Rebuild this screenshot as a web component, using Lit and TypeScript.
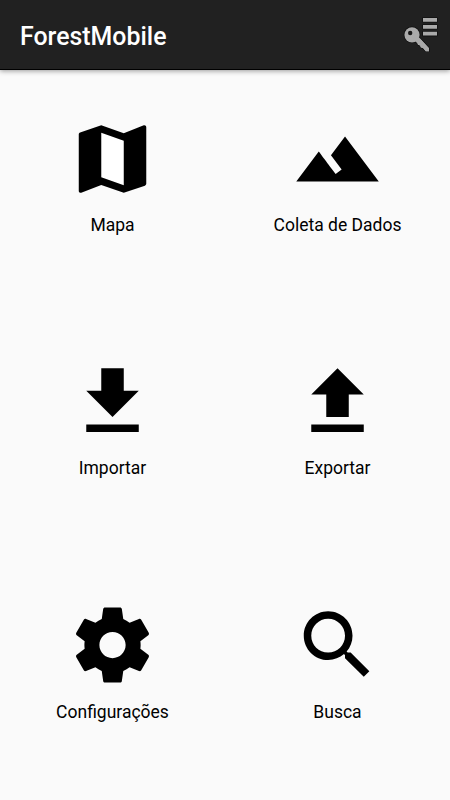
import { LitElement, html, css, svg } from "lit";
import { customElement } from "lit/decorators.js";

const items = [
  { label: "Mapa", map: true, d: "M20.5 3l-.16.03L15 5.1 9 3 3.36 4.9c-.21.07-.36.25-.36.48V20.5c0 .28.22.5.5.5l.16-.03L9 18.9l6 2.1 5.64-1.9c.21-.07.36-.25.36-.48V3.5c0-.28-.22-.5-.5-.5zM15 19l-6-2.11V5l6 2.11V19z" },
  { label: "Coleta de Dados", d: "M14 6l-3.75 5 2.85 3.8-1.6 1.2C9.81 13.75 7 10 7 10l-6 8h22L14 6z" },
  { label: "Importar", d: "M19 9h-4V3H9v6H5l7 7 7-7zM5 18v2h14v-2H5z" },
  { label: "Exportar", d: "M9 16h6v-6h4l-7-7-7 7h4zm-4 2h14v2H5z" },
  { label: "Configurações", d: "M19.43 12.98c.04-.32.07-.64.07-.98s-.03-.66-.07-.98l2.11-1.65c.19-.15.24-.42.12-.64l-2-3.46c-.12-.22-.39-.3-.61-.22l-2.49 1c-.52-.4-1.08-.73-1.69-.98l-.38-2.65C14.46 2.18 14.25 2 14 2h-4c-.25 0-.46.18-.49.42l-.38 2.65c-.61.25-1.17.59-1.69.98l-2.49-1c-.23-.09-.49 0-.61.22l-2 3.46c-.13.22-.07.49.12.64l2.11 1.65c-.04.32-.07.65-.07.98s.03.66.07.98l-2.11 1.65c-.19.15-.24.42-.12.64l2 3.46c.12.22.39.3.61.22l2.49-1c.52.4 1.08.73 1.69.98l.38 2.65c.03.24.24.42.49.42h4c.25 0 .46-.18.49-.42l.38-2.65c.61-.25 1.17-.59 1.69-.98l2.49 1c.23.09.49 0 .61-.22l2-3.46c.12-.22.07-.49-.12-.64l-2.11-1.65zM12 15.5c-1.93 0-3.5-1.57-3.5-3.5s1.57-3.5 3.5-3.5 3.5 1.57 3.5 3.5-1.57 3.5-3.5 3.5z" },
  { label: "Busca", d: "M15.5 14h-.79l-.28-.27C15.41 12.59 16 11.11 16 9.5 16 5.91 13.09 3 9.5 3S3 5.91 3 9.5 5.91 16 9.5 16c1.61 0 3.09-.59 4.23-1.57l.27.28v.79l5 4.99L20.49 19l-4.99-5zm-6 0C7.01 14 5 11.99 5 9.5S7.01 5 9.5 5 14 7.01 14 9.5 11.99 14 9.5 14z" },
];

@customElement("app-root")
export class AppRoot extends LitElement {
  static styles = css`
    :host {
      display: flex;
      flex-direction: column;
      height: 100vh;
      background: #fafafa;
      color: #000;
      font-family: Roboto, "Liberation Sans", sans-serif;
    }
    .bar {
      box-sizing: border-box;
      flex: none;
      height: 70px;
      padding: 0 10px 0 20px;
      display: flex;
      align-items: center;
      justify-content: space-between;
      background: #212121;
      border-bottom: 1px solid #000;
      box-shadow: 0 1px 5px rgba(0, 0, 0, 0.4);
    }
    .title {
      margin: 0;
      padding-top: 4px;
      font-size: 24.9px;
      line-height: 30px;
      font-weight: 500;
      color: #fff;
    }
    .key {
      width: 36px;
      height: 39px;
      display: block;
    }
    .grid {
      flex: 1;
      display: grid;
      grid-template-columns: 1fr 1fr;
      grid-template-rows: repeat(3, 1fr);
    }
    .item {
      display: flex;
      flex-direction: column;
      align-items: center;
      padding-top: 43.5px;
    }
    .icon {
      width: 90px;
      height: 90px;
      display: block;
    }
    .label {
      margin-top: 10.5px;
      font-size: 17.5px;
      line-height: 22px;
    }
  `;

  render() {
    return html`
      <header class="bar">
        <h1 class="title">ForestMobile</h1>
        <svg class="key" viewBox="404 15 36 39" overflow="visible">
          <g fill="#aaa" stroke="#111" stroke-width="1.600" stroke-linejoin="round" paint-order="stroke">
            <path d="M419.300 37.700L429 48.300V51.300H425.700L423.300 48.300 420.700 47.300 420.300 45.500 418 44.800 417.300 42.700 414 41Z" />
            <circle cx="412" cy="34.800" r="7.600" />
            <path d="M423 18h14v3.800h-14zM423 25h14v3.800h-14zM423 31.800h14v3.800h-14z" />
          </g>
          <path fill="#aaa" d="M419.300 37.700L429 48.300V51.300H425.700L423.300 48.300 420.700 47.300 420.300 45.500 418 44.800 417.300 42.700 412 39Z" />
          <circle cx="410.200" cy="33" r="2.200" fill="#181818" />
        </svg>
      </header>
      <main class="grid">
        ${items.map(
          (i) => html`<div class="item">
            <svg class="icon" viewBox="0.130 0 24 24">
              ${i.map ? svg`<path fill="#fff" d="M9 5l6 2.110V19l-6-2.110z" />` : null}
              <path d=${i.d} />
            </svg>
            <span class="label">${i.label}</span>
          </div>`
        )}
      </main>
    `;
  }
}
